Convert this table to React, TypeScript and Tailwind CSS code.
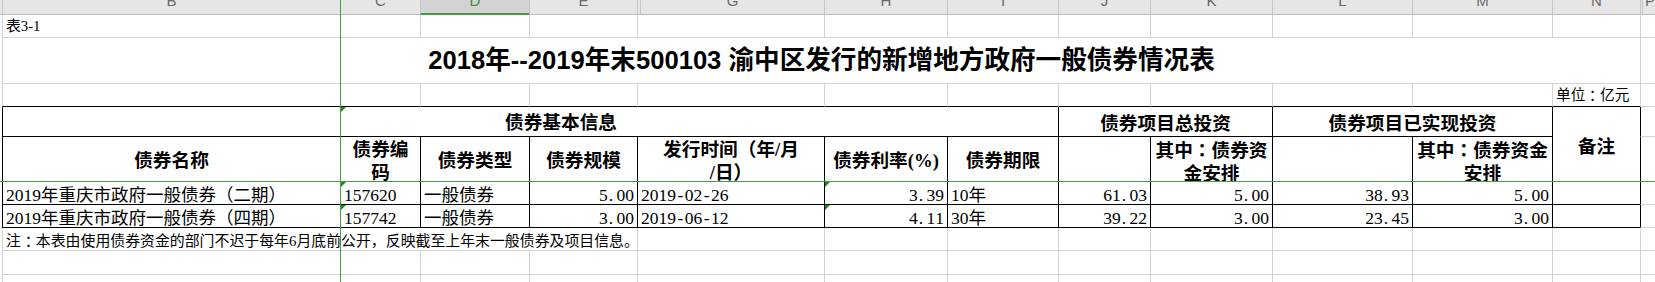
import React from "react";

const gL = "border-l border-l-[#d4d4d4]";
const kL = "border-l border-l-black";
const gB = "border-b border-b-[#d4d4d4]";
const kB = "border-b border-b-black";

function M({ s }: { s: string }) {
  return (
    <span className="inline-flex">
      {s.split("").map((c, i) => (
        <span
          key={i}
          className={c === "." ? "inline-block w-[0.5em] text-left pl-[1px]" : "inline-block w-[0.5em] text-center"}
        >
          {c}
        </span>
      ))}
    </span>
  );
}

function Co() {
  return <span className="font-['Noto_Sans_CJK_TC',sans-serif]">：</span>;
}

function Hd({ l, sel }: { l: string; sel?: boolean }) {
  return (
    <div
      className={
        sel
          ? "overflow-hidden border-l border-l-[#c6c6c6] border-b-2 border-b-[#3f9f3f] bg-[#d3d3d3] text-center text-[15px] leading-[15px] text-[#3a8a3a]"
          : "overflow-hidden border-l border-l-[#c6c6c6] border-b border-b-[#bcbcbc] bg-[#e6e6e6] text-center text-[15px] leading-[15px] text-[#6a6a6a]"
      }
    >
      <div className="-mt-[7px]">{l}</div>
    </div>
  );
}

function Tri() {
  return (
    <div className="absolute left-0 top-0 h-0 w-0 border-t-[5px] border-r-[5px] border-t-[#1b8a1b] border-r-transparent" />
  );
}

const sp = <div />;

function Empty({ cls }: { cls: string }) {
  return <div className={cls} />;
}

const hcell = "flex items-center justify-center pt-[3px] text-[18.67px] font-bold leading-[23px] text-center";
const dcell = "relative flex items-center pt-[4px] text-[17.5px] leading-[18px] whitespace-nowrap";

function DataRow({ name, code, type, size, date, rate, term, a, b, c, d, tri }: any) {
  const cl = `${kL} ${kB}`;
  return (
    <>
      {sp}
      <div className={`${cl} ${dcell} pl-[3px] overflow-hidden`}>{name}</div>
      <div className={`${cl} ${dcell} pl-[3px]`}>
        {tri && <Tri />}
        {code}
      </div>
      <div className={`${cl} ${dcell} pl-[3px]`}>{type}</div>
      <div className={`${cl} ${dcell} justify-end pr-[3px]`}>
        <M s={size} />
      </div>
      <div className={`${cl} ${dcell} pl-[3px]`}>
        <M s={date} />
      </div>
      <div className={`${cl} ${dcell} justify-end pr-[3px]`}>
        {tri && <Tri />}
        <M s={rate} />
      </div>
      <div className={`${cl} ${dcell} pl-[3px]`}>{term}</div>
      <div className={`${cl} ${dcell} justify-end pr-[3px]`}>
        <M s={a} />
      </div>
      <div className={`${cl} ${dcell} justify-end pr-[3px]`}>
        <M s={b} />
      </div>
      <div className={`${cl} ${dcell} justify-end pr-[3px]`}>
        <M s={c} />
      </div>
      <div className={`${cl} ${dcell} justify-end pr-[3px]`}>
        <M s={d} />
      </div>
      <div className={cl} />
      <div className={`${kL} ${gB}`} />
    </>
  );
}

function EmptyRow() {
  const cl = `${gL} ${gB}`;
  return (
    <>
      {sp}
      {Array.from({ length: 13 }).map((_, i) => (
        <Empty key={i} cls={cl} />
      ))}
    </>
  );
}

export default function App() {
  const g = `${gL} ${gB}`;
  const k = `${kL} ${kB}`;
  return (
    <div className="relative h-[282px] w-[1655px] overflow-hidden bg-white font-['Liberation_Serif','Noto_Sans_CJK_SC',serif] text-black">
      <div className="grid grid-cols-[2px_338px_80px_109px_108px_187px_123px_111px_92px_122px_140px_140px_88px_1fr] grid-rows-[15px_23px_46px_23px_30px_45px_23px_23px_23px_24px_23px]">
        {/* column header row */}
        <div className="border-b border-b-[#bcbcbc] bg-[#e6e6e6]" />
        <div className="font-['Liberation_Sans',sans-serif] contents">
          <Hd l="B" />
          <Hd l="C" />
          <Hd l="D" sel />
          <Hd l="E" />
          <div className="flex overflow-hidden border-l border-l-[#c6c6c6] border-b border-b-[#bcbcbc] bg-[#e6e6e6] text-[15px] leading-[15px] text-[#6a6a6a]">
            <div className="h-full w-[3px] shrink-0 border-r border-r-[#c6c6c6]" />
            <div className="-mt-[7px] flex-1 text-center">G</div>
          </div>
          <Hd l="H" />
          <Hd l="I" />
          <Hd l="J" />
          <Hd l="K" />
          <Hd l="L" />
          <Hd l="M" />
          <Hd l="N" />
          <div className="flex overflow-hidden border-l border-l-[#c6c6c6] border-b border-b-[#bcbcbc] bg-[#e6e6e6] text-[15px] leading-[15px] text-[#6a6a6a]">
            <div className="h-full w-[2px] shrink-0 border-r border-r-[#c6c6c6]" />
            <div className="-mt-[7px] pl-[2px]">P</div>
          </div>
        </div>

        {/* row 1 */}
        {sp}
        <div className={`${g} flex items-center pl-[3px] text-[14.8px]`}>表3-1</div>
        {Array.from({ length: 12 }).map((_, i) => (
          <Empty key={"r1" + i} cls={g} />
        ))}

        {/* row 2 title */}
        {sp}
        <div
          className={`${g} col-span-12 flex items-center justify-center font-['Liberation_Sans','Noto_Sans_CJK_SC',sans-serif] text-[25.6px] font-bold whitespace-nowrap`}
        >
          2018年--2019年末500103 渝中区发行的新增地方政府一般债券情况表
        </div>
        <div className={g} />

        {/* row 3 */}
        {sp}
        {Array.from({ length: 11 }).map((_, i) => (
          <Empty key={"r3" + i} cls={`${gL} ${kB}`} />
        ))}
        <div className={`${gL} ${kB} flex items-center pl-[3px] text-[14.67px] whitespace-nowrap`}>
          单位<Co />亿元
        </div>
        <div className={g} />

        {/* row 4 */}
        {sp}
        <div className={k} />
        <div className={`${k} relative col-span-6 flex items-center pl-[164px] pt-[3px] text-[18.67px] font-bold`}>
          <Tri />
          债券基本信息
        </div>
        <div className={`${k} col-span-2 ${hcell}`}>债券项目总投资</div>
        <div className={`${k} col-span-2 ${hcell}`}>债券项目已实现投资</div>
        <div className={`${k} row-span-2 ${hcell} pt-[5px]`}>备注</div>
        <div className={`${kL} ${gB}`} />

        {/* row 5 */}
        {sp}
        <div className={`${k} ${hcell}`}>债券名称</div>
        <div className={`${k} ${hcell} overflow-hidden`}>
          <div>
            债券编
            <br />码
          </div>
        </div>
        <div className={`${k} ${hcell}`}>债券类型</div>
        <div className={`${k} ${hcell}`}>债券规模</div>
        <div className={`${k} ${hcell} overflow-hidden whitespace-nowrap`}>
          <div>
            发行时间（年/月
            <br />
            /日）
          </div>
        </div>
        <div className={`${k} ${hcell} whitespace-nowrap`}>
          债券利率<span className="font-['Liberation_Serif',serif]">(%)</span>
        </div>
        <div className={`${k} ${hcell}`}>债券期限</div>
        <div className={k} />
        <div className={`${k} ${hcell} overflow-hidden whitespace-nowrap`}>
          <div>
            其中<Co />债券资
            <br />
            金安排
          </div>
        </div>
        <div className={k} />
        <div className={`${k} ${hcell} overflow-hidden whitespace-nowrap`}>
          <div>
            其中<Co />债券资金
            <br />
            安排
          </div>
        </div>
        <div className={`${kL} ${gB}`} />

        {/* data rows */}
        <DataRow
          name="2019年重庆市政府一般债券（二期）"
          code="157620"
          type="一般债券"
          size="5.00"
          date="2019-02-26"
          rate="3.39"
          term="10年"
          a="61.03"
          b="5.00"
          c="38.93"
          d="5.00"
          tri
        />
        <DataRow
          name="2019年重庆市政府一般债券（四期）"
          code="157742"
          type="一般债券"
          size="3.00"
          date="2019-06-12"
          rate="4.11"
          term="30年"
          a="39.22"
          b="3.00"
          c="23.45"
          d="3.00"
          tri
        />

        {/* note row */}
        {sp}
        <div className={`${g} col-span-4 flex items-center overflow-visible whitespace-nowrap pl-[3px] pt-[4px] text-[14.9px]`}>
          注<Co />本表由使用债券资金的部门不迟于每年6月底前公开，反映截至上年末一般债券及项目信息。
        </div>
        {Array.from({ length: 9 }).map((_, i) => (
          <Empty key={"r8" + i} cls={g} />
        ))}

        <EmptyRow />
        <EmptyRow />
      </div>

      {/* freeze pane lines */}
      <div className="absolute left-[340px] top-0 h-full w-px bg-[#45a045]" />
      <div className="absolute left-0 top-[181px] h-px w-full bg-[#45a045]" />
    </div>
  );
}
